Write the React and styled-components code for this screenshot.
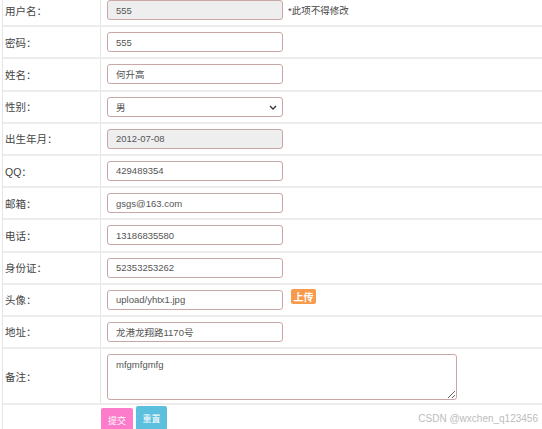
import React from 'react'
import styled, { createGlobalStyle } from 'styled-components'

const Global = createGlobalStyle`
  body {
    margin: 0;
    background: #fff;
    font-family: "Liberation Sans", "Noto Sans CJK SC", sans-serif;
  }
`

const fields = [
  { label: '用户名：', value: '555', disabled: true, note: '*此项不得修改' },
  { label: '密码：', value: '555' },
  { label: '姓名：', value: '何升高' },
  { label: '性别：', select: '男' },
  { label: '出生年月：', value: '2012-07-08', disabled: true },
  { label: 'QQ：', value: '429489354' },
  { label: '邮箱：', value: 'gsgs@163.com' },
  { label: '电话：', value: '13186835580' },
  { label: '身份证：', value: '52353253262' },
  { label: '头像：', value: 'upload/yhtx1.jpg', upload: true },
  { label: '地址：', value: '龙港龙翔路1170号' },
]

export default function App() {
  return (
    <>
      <Global />
      <Page>
        <Form>
          {fields.map((f) => (
            <Row key={f.label}>
              <Label>{f.label}</Label>
              <Cell>
                {f.select ? (
                  <SelectWrap>
                    <Select defaultValue={f.select}>
                      <option>男</option>
                      <option>女</option>
                    </Select>
                    <Chevron width="8" height="5" viewBox="0 0 8 5">
                      <path d="M1 1l3 3 3-3" fill="none" stroke="#333" strokeWidth="1.3" />
                    </Chevron>
                  </SelectWrap>
                ) : (
                  <Field defaultValue={f.value} disabled={f.disabled} $disabled={f.disabled} />
                )}
                {f.note && <Note>{f.note}</Note>}
                {f.upload && <UploadBtn>上传</UploadBtn>}
              </Cell>
            </Row>
          ))}
          <Row $h={56}>
            <Label>备注：</Label>
            <Cell>
              <Memo defaultValue="mfgmfgmfg" />
            </Cell>
          </Row>
          <ButtonRow>
            <span />
            <Buttons>
              <Btn $bg="#fd7bcb" $top={5} $w={32}>提交</Btn>
              <Btn $bg="#5bc0de" $top={3} $w={31}>重置</Btn>
            </Buttons>
          </ButtonRow>
        </Form>
        <Watermark>CSDN @wxchen_q123456</Watermark>
      </Page>
    </>
  )
}

const Page = styled.div`
  position: relative;
  width: 542px;
  height: 429px;
  overflow: hidden;
`

const Form = styled.div`
  margin-top: -7px;
  margin-left: 2px;
  border-left: 1px solid #e4e4e4;
`

const Row = styled.div`
  display: grid;
  grid-template-columns: 98px 1fr;
  height: ${(p) => p.$h || 32.2}px;
  box-sizing: border-box;
  border-top: 2px solid #ececec;
`

const Label = styled.div`
  display: flex;
  align-items: center;
  padding-left: 2px;
  font-size: 10.5px;
  color: #444;
  border-right: 1px solid #e4e4e4;
`

const Cell = styled.div`
  display: flex;
  align-items: flex-start;
  padding: 5px 0 0 6px;
  gap: 8px;
`

const Field = styled.input`
  box-sizing: border-box;
  width: 176px;
  height: 20px;
  margin: 0;
  padding: 0 8px;
  border: 1px solid #c9a7a7;
  border-radius: 3px;
  background: ${(p) => (p.$disabled ? '#eeeeee' : '#fff')};
  color: #555;
  font-family: "Liberation Sans", "Noto Sans CJK SC", sans-serif;
  font-size: 9.5px;
  outline: none;
`

const SelectWrap = styled.div`
  position: relative;
  width: 176px;
  height: 20px;
`

const Select = styled.select`
  box-sizing: border-box;
  appearance: none;
  width: 176px;
  height: 20px;
  margin: 0;
  padding: 0 8px;
  border: 1px solid #c9a7a7;
  border-radius: 3px;
  background: #fff;
  color: #555;
  font-family: "Liberation Sans", "Noto Sans CJK SC", sans-serif;
  font-size: 9.5px;
`

const Chevron = styled.svg`
  position: absolute;
  right: 6px;
  top: 8px;
  pointer-events: none;
`

const Memo = styled.textarea`
  box-sizing: border-box;
  width: 350px;
  height: 46px;
  margin: 0;
  padding: 4px 8px;
  border: 1px solid #c9a7a7;
  border-radius: 3px;
  color: #555;
  font-family: "Liberation Sans", "Noto Sans CJK SC", sans-serif;
  font-size: 9.5px;
  resize: both;
`

const Note = styled.span`
  align-self: center;
  margin-top: -5px;
  margin-left: -3px;
  font-size: 9.5px;
  color: #444;
`

const UploadBtn = styled.button`
  width: 25px;
  height: 15px;
  margin: -1px 0 0;
  padding: 0;
  border: none;
  border-radius: 2px;
  background: #f89a4c;
  color: #fff;
  font-weight: bold;
  font-size: 10px;
  line-height: 15px;
  font-family: "Noto Sans CJK SC", sans-serif;
`

const ButtonRow = styled.div`
  display: grid;
  grid-template-columns: 98px 1fr;
  height: 40px;
  border-top: 2px solid #ececec;
`

const Buttons = styled.div`
  display: flex;
  align-items: flex-start;
  gap: 3px;
`

const Btn = styled.button`
  width: ${(p) => p.$w}px;
  height: 24px;
  margin: ${(p) => p.$top - 2}px 0 0;
  padding: 0;
  border: none;
  border-radius: 2px;
  background: ${(p) => p.$bg};
  color: #fff;
  font-size: 9px;
  font-family: "Noto Sans CJK SC", sans-serif;
`

const Watermark = styled.div`
  position: absolute;
  right: 4px;
  bottom: 5px;
  font-size: 10px;
  color: #bdbdbd;
`
